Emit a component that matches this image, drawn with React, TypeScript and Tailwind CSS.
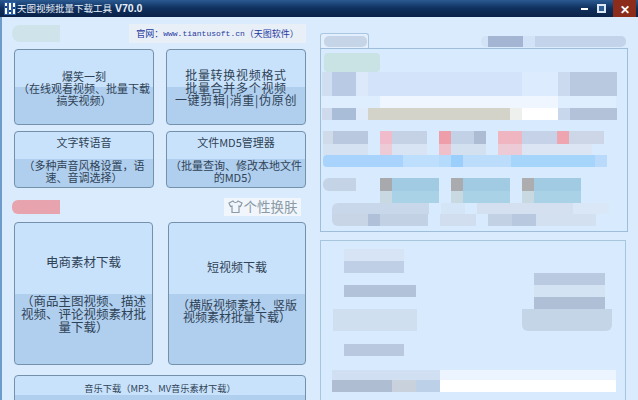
const sans = "font-['Noto_Sans_CJK_SC','Liberation_Sans',sans-serif]";

function ToolButton({ className, lines, text }: { className: string; lines: string[]; text: string }) {
  return (
    <button
      className={`flex flex-col items-center rounded-[4px] border border-[#7391ab] bg-linear-to-b from-[#c9e2fb] from-50% to-[#b0cfee] to-50% text-center text-[#2f4256] ${className}`}
    >
      {lines.map((l, i) => (
        <span key={i} className={`whitespace-pre ${text}`}>
          {l}
        </span>
      ))}
    </button>
  );
}

// pixelated (censored) rows of the right side
function Mosaic({ h, cells }: { h: string; cells: string[] }) {
  return (
    <div className={`flex ${h}`}>
      {cells.map((c, i) => (
        <div key={i} className={c} />
      ))}
    </div>
  );
}

const topRows = [
  { h: "h-[4px]", cells: [] },
  { h: "h-[19px]", cells: ["w-[3px]", "w-[56px] rounded-[4px] bg-[#c9e2e4]"] },
  { h: "h-[24px]", cells: ["w-[1px]", "w-[10px] bg-[#d0def1]", "w-[24px] bg-[#b9cbe4]", "w-[12px] bg-[#dbe9fb]", "w-[154px] bg-[#d3e3f9]", "w-[36px] bg-[#dcebfd]", "w-[12px] bg-[#cbdaef]", "w-[47px] bg-[#b9c9e0]"] },
  { h: "h-[12px]", cells: ["w-[59px] bg-[#dfeeff]", "w-[178px] bg-[#eff6ff]", "w-[58px] bg-[#dfeeff]"] },
  { h: "h-[12px]", cells: ["w-[1px]", "w-[10px] bg-[#cfdbec]", "w-[24px] bg-[#a9bcd8]", "w-[12px] bg-[#dfebfb]", "w-[142px] bg-[#d3d3ca]", "w-[12px] bg-[#eef0ee]", "w-[36px] bg-white", "w-[12px] bg-[#c9d7ed]", "w-[47px] bg-[#b3c2d8]"] },
  { h: "h-[11px]", cells: [] },
  { h: "h-[13px]", cells: ["w-[2px]", "w-[10px] bg-[#cfdbe9]", "w-[35px] bg-[#b9c8de]", "w-[12px]", "w-[12px] bg-[#f0bccb]", "w-[35px] bg-[#c5d2e6]", "w-[12px]", "w-[12px] bg-[#ee9ea8]", "w-[23px] bg-[#c3d1e6]", "w-[12px] bg-[#adbcd2]", "w-[12px]", "w-[24px] bg-[#efb6c1]", "w-[35px] bg-[#c5d2e7]", "w-[12px] bg-[#efa5b0]", "w-[35px] bg-[#cdd6e6]"] },
  { h: "h-[11px]", cells: ["w-[2px]", "w-[45px] bg-[#d5e2f2]", "w-[12px]", "w-[12px] bg-[#eccad6]", "w-[35px] bg-[#d8e4f4]", "w-[12px]", "w-[12px] bg-[#f0c0ca]", "w-[35px] bg-[#d3e0f0]", "w-[12px]", "w-[24px] bg-[#eccad6]", "w-[70px] bg-[#dbe5f3]"] },
  { h: "h-[12px]", cells: ["w-[2px]", "w-[80px] rounded-l-[4px] bg-[#a7d3fc]", "w-[36px] bg-[#bddefc]", "w-[12px] bg-[#b5dbfc]", "w-[12px] bg-[#9acffc]", "w-[48px] bg-[#bcdcfb]", "w-[84px] bg-[#a6d5fc]", "w-[12px] bg-[#b9dafa]"] },
  { h: "h-[11px]", cells: [] },
  { h: "h-[13px]", cells: ["w-[2px]", "w-[33px] rounded-l-[6px] bg-[#c5d3e6]", "w-[24px]", "w-[12px] bg-[#a8a9ac]", "w-[47px] bg-[#a1cbe2]", "w-[12px]", "w-[12px] bg-[#aaabae]", "w-[47px] bg-[#a1cbe2]", "w-[12px]", "w-[12px] bg-[#adadb0]", "w-[47px] bg-[#a1cbe2]"] },
  { h: "h-[12px]", cells: ["w-[59px]", "w-[12px] bg-[#c9d9e2]", "w-[47px] bg-[#a9d2e6]", "w-[12px]", "w-[12px] bg-[#c9d9e2]", "w-[47px] bg-[#a9d2e6]", "w-[12px]", "w-[12px] bg-[#c9d9e2]", "w-[47px] bg-[#a9d2e6]"] },
  { h: "h-[11px]", cells: ["w-[11px]", "w-[97px] rounded-tl-[6px] bg-[#c9d7ea]", "w-[12px]", "w-[24px] bg-[#d5e5f8]", "w-[12px]", "w-[96px] bg-[#d4e0f0]", "w-[36px] bg-[#dae7f6]"] },
  { h: "h-[12px]", cells: ["w-[11px]", "w-[36px] rounded-bl-[6px] bg-[#c8d5e7]", "w-[12px] bg-[#b0c0d8]", "w-[48px] bg-[#c3d1e5]", "w-[12px]", "w-[36px] bg-[#d0deef]", "w-[12px]", "w-[24px] bg-[#c3d1e5]", "w-[24px] bg-[#b8c8df]", "w-[60px] bg-[#d3e0f0]"] },
];

const bottomRows = [
  { h: "h-[8px]", cells: [] },
  { h: "h-[12px]", cells: ["w-[23px]", "w-[60px] bg-[#d6e4f6]"] },
  { h: "h-[12px]", cells: ["w-[23px]", "w-[60px] bg-[#bfcfe5]"] },
  { h: "h-[12px]", cells: ["w-[213px]", "w-[71px] bg-[#bacae0]"] },
  { h: "h-[12px]", cells: ["w-[23px]", "w-[72px] bg-[#b1c2d9]", "w-[118px]", "w-[71px] bg-[#d4e3f3]"] },
  { h: "h-[12px]", cells: ["w-[213px]", "w-[71px] bg-[#afbfd6]"] },
  { h: "h-[22px]", cells: ["w-[12px]", "w-[84px] bg-[#cfdff0]", "w-[105px]", "w-[90px] rounded-b-[6px] bg-[#c5d5e8]"] },
  { h: "h-[13px]", cells: [] },
  { h: "h-[12px]", cells: ["w-[23px]", "w-[60px] bg-[#b9c8de]"] },
  { h: "h-[14px]", cells: [] },
  { h: "h-[10px]", cells: ["w-[11px]", "w-[108px] bg-[#d0e0f2]", "w-[176px] bg-[#ecf5ff]"] },
  { h: "h-[12px]", cells: ["w-[11px]", "w-[60px] bg-[#aebdd2]", "w-[24px] bg-[#c9d2dc]", "w-[24px] bg-[#bcd0e8]", "w-[176px] bg-white"] },
];

export default function App() {
  return (
    <div className={`flex h-[400px] w-[638px] flex-col overflow-hidden bg-[#d9ebfd] ${sans}`}>
      {/* Title bar */}
      <div className="flex h-[17px] shrink-0 items-center bg-linear-to-b from-[#2a5a92] via-[#0f2f5c] to-[#0a2248] pl-[4px]">
        <svg width="12" height="13" viewBox="0 0 12 13" className="mr-[1px]">
          <rect width="12" height="13" fill="#2d5fa8" />
          <rect x="1" y="1" width="2" height="11" fill="#fff" />
          <rect x="5" y="1" width="2" height="11" fill="#fff" />
          <rect x="9" y="1" width="2" height="11" fill="#fff" />
          <rect x="1" y="4" width="2" height="2" fill="#1b3f7d" />
          <rect x="5" y="8" width="2" height="2" fill="#1b3f7d" />
          <rect x="9" y="5" width="2" height="2" fill="#1b3f7d" />
        </svg>
        <span className="text-[9.5px] leading-none whitespace-pre text-[#e8f0fa]">天图视频批量下载工具</span>
        <span className="ml-[3px] font-['Liberation_Sans',sans-serif] text-[10.5px] leading-none font-bold text-[#e8f0fa]">V70.0</span>
        <div className="ml-auto flex h-full items-center">
          <div className="mr-[9px] h-[2px] w-[7px] bg-white" />
          <div className="mr-[7px] h-[9px] w-[9px] border-2 border-[#dce8f5] bg-[#2f5f95]" />
          <div className="flex h-full w-[23px] items-center justify-center bg-[#8c2d1c] text-[12px] leading-none font-bold text-white">✕</div>
          <div className="w-[2px]" />
        </div>
      </div>

      <div className="flex flex-1 border-l-2 border-[#6d9ccb]">
        {/* Left column */}
        <div className="flex w-[318px] shrink-0 flex-col pl-[12px]">
          <div className="mt-[7px] flex h-[19px] items-center justify-between pr-[14px]">
            <div className="-ml-[2px] h-[17px] w-[48px] rounded-l-[8px] bg-[#cfe4ea]" />
            <div className="flex h-[19px] w-[177px] items-center justify-center bg-[#e9eff7] text-[9px] whitespace-pre text-[#1f3aa0]">
              官网：<span className="font-['Liberation_Mono',monospace] text-[8px]">www.tiantusoft.cn</span>（天图软件）
            </div>
          </div>
          <div className="mt-[6px] flex gap-[12px]">
            <ToolButton className="h-[76px] w-[140px] pt-[20px]" text="text-[11px] leading-[12px]" lines={["爆笑一刻", "（在线观看视频、批量下载", "搞笑视频）"]} />
            <ToolButton className="h-[76px] w-[140px] pt-[19px]" text="text-[12px] tracking-[0.7px] leading-[12.5px]" lines={["批量转换视频格式", "批量合并多个视频", "一键剪辑|消重|伪原创"]} />
          </div>
          <div className="mt-[6px] flex gap-[12px]">
            <ToolButton className="h-[57px] w-[140px] pt-[5px]" text="text-[11px] leading-[11.5px]" lines={["文字转语音", " ", "（多种声音风格设置，语", "速、音调选择）"]} />
            <ToolButton className="h-[57px] w-[140px] pt-[5px]" text="text-[11px] leading-[11.5px]" lines={["文件MD5管理器", " ", "（批量查询、修改本地文件", "的MD5）"]} />
          </div>
          <div className="mt-[9px] flex h-[19px] items-center justify-between pr-[19px]">
            <div className="-ml-[2px] h-[14px] w-[48px] rounded-l-[6px] bg-[#e8a4ae]" />
            <div className="flex h-[18px] w-[77px] items-center justify-center bg-[#f0f6fc] text-[13.5px] leading-none text-[#8c9aa6]">
              <svg width="15" height="15" viewBox="0 0 15 15" fill="none" stroke="#8c9aa6" strokeWidth="1.2" className="mr-[1px]">
                <path d="M5 2 L1 4 L2.5 7.5 L4 7 L4 13.5 L11 13.5 L11 7 L12.5 7.5 L14 4 L10 2 C9 4 6 4 5 2 Z" />
              </svg>
              个性换肤
            </div>
          </div>
          <div className="mt-[6px] flex gap-[15px]">
            <ToolButton className="h-[143px] w-[139px] pt-[32px]" text="text-[12.5px] leading-[13px]" lines={["电商素材下载", " ", " ", "（商品主图视频、描述", "视频、评论视频素材批", "量下载）"]} />
            <ToolButton className="h-[143px] w-[138px] pt-[38px]" text="text-[12px] leading-[12.5px]" lines={["短视频下载", " ", " ", "（横版视频素材、竖版", "视频素材批量下载）"]} />
          </div>
          <ToolButton className="mt-[10px] h-[40px] w-[292px] pt-[6px]" text="text-[9.25px] leading-[12px]" lines={["音乐下载（MP3、MV音乐素材下载）"]} />
        </div>

        {/* Right column */}
        <div className="flex w-[308px] shrink-0 flex-col">
          <div className="mt-[16px] flex h-[15px] items-end justify-between">
            <div className="flex h-[15px] w-[49px] items-center rounded-t-[3px] border-x border-t border-[#a9c6e0] bg-[#e3effd] pl-[3px]">
              <div className="h-[11px] w-[43px] rounded-[5px] bg-[#c6d4e7]" />
            </div>
            <div className="mb-[1px] flex h-[11px]">
              <div className="w-[7px] rounded-l-[5px] bg-[#d3e3f6]" />
              <div className="w-[35px] bg-[#a3b5d2]" />
              <div className="w-[12px] bg-[#d2e3f7]" />
              <div className="mr-[2px] w-[91px] rounded-r-[5px] bg-[#c3d3ea]" />
            </div>
          </div>
          <div className="h-[184px] overflow-hidden border border-[#9dbdd9] bg-[#d8eafe]">
            {topRows.map((r, i) => (
              <Mosaic key={i} h={r.h} cells={r.cells} />
            ))}
          </div>
          <div className="mt-[8px] mr-[2px] flex-1 overflow-hidden border border-[#a6c6de] bg-[#d8eafe]">
            {bottomRows.map((r, i) => (
              <Mosaic key={i} h={r.h} cells={r.cells} />
            ))}
          </div>
        </div>
      </div>
    </div>
  );
}
